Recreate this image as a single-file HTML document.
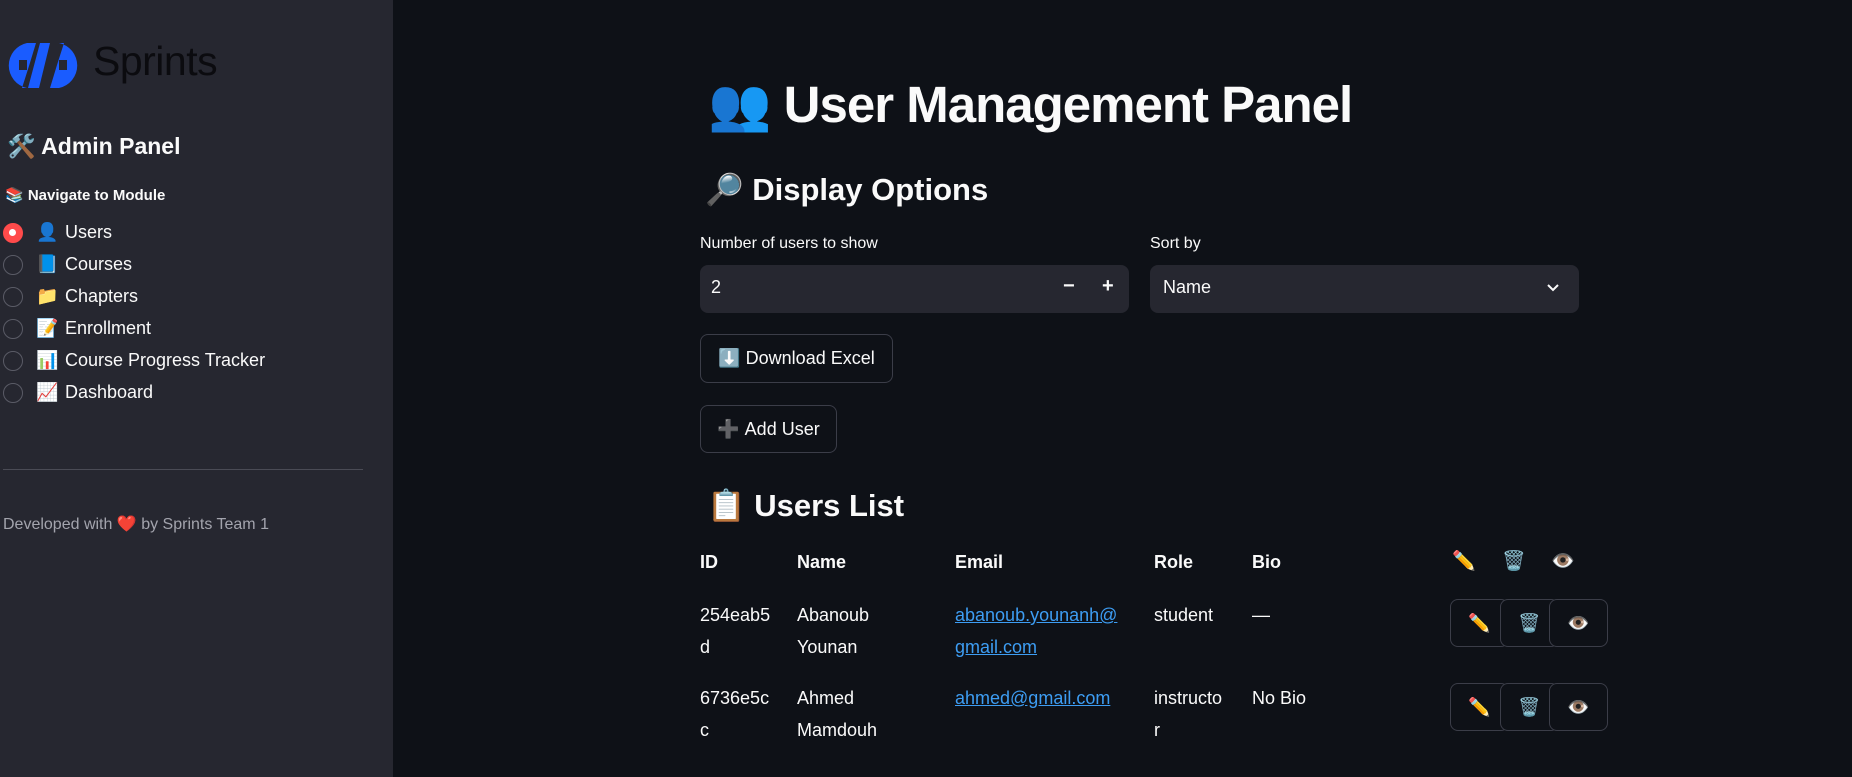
<!DOCTYPE html>
<html><head><meta charset="utf-8"><style>
*{margin:0;padding:0;box-sizing:border-box}
body{width:1852px;height:777px;overflow:hidden;background:#0e1117;font-family:"Liberation Sans","Noto Sans CJK JP",sans-serif;color:#fafafa;position:relative}
.a{position:absolute;white-space:nowrap}
#sb{position:absolute;left:0;top:0;width:393px;height:777px;background:#262730}
.radio{position:absolute;left:3px;width:20px;height:20px;border-radius:50%;border:1.5px solid #5a5b66}
.radio.on{background:#ff4b4b;border-color:#ff4b4b}
.radio.on:after{content:"";position:absolute;left:5px;top:5px;width:7px;height:7px;border-radius:50%;background:#fff}
.nav{position:absolute;left:36px;font-size:18px}
.nav span{display:inline-block;width:29px}
.box{position:absolute;background:#262730;border-radius:8px}
.btn{position:absolute;border:1px solid #3b3d48;border-radius:8px;background:#0e1117;font-size:18px;display:flex;align-items:center;justify-content:center}
.t{position:absolute;font-size:18px;line-height:32px}
.h{font-weight:bold}
.lk{color:#3d9df3;text-decoration:underline}
.ib{position:absolute;width:59px;height:48px;border:1px solid #3b3d48;border-radius:8px;background:#0e1117;font-size:18px;display:flex;align-items:center;justify-content:center}
</style></head><body>
<div id="sb">
<svg class="a" style="left:5px;top:42px" width="76" height="47" viewBox="0 0 76 47">
<path d="M22 1 L31 1 L24 24 L17 46 L22 46 A23 23 0 0 1 22 1 Z" fill="#1a5cff"/>
<path d="M33 1 L43 1 L32 46 L21 46 Z" fill="#1a5cff" transform="translate(2,0)"/>
<path d="M54 46 L45 46 L52 23 L59 1 L54 1 A23 23 0 0 1 54 46 Z" fill="#1a5cff"/>
<rect x="14" y="18" width="8" height="10" fill="#262730"/>
<rect x="54" y="18" width="8" height="10" fill="#262730"/>
</svg>
<div class="a" style="left:93px;top:38px;font-size:41px;color:#0b0b0f;letter-spacing:-0.5px">Sprints</div>
<div class="a" style="left:7px;top:133px;font-size:23px;font-weight:bold">🛠️ Admin Panel</div>
<div class="a" style="left:5px;top:186px;font-size:15px;font-weight:bold">📚 Navigate to Module</div>
<div class="radio on" style="top:223px"></div><div class="nav" style="top:222px"><span>👤</span>Users</div>
<div class="radio" style="top:255px"></div><div class="nav" style="top:254px"><span>📘</span>Courses</div>
<div class="radio" style="top:287px"></div><div class="nav" style="top:286px"><span>📁</span>Chapters</div>
<div class="radio" style="top:319px"></div><div class="nav" style="top:318px"><span>📝</span>Enrollment</div>
<div class="radio" style="top:351px"></div><div class="nav" style="top:350px"><span>📊</span>Course Progress Tracker</div>
<div class="radio" style="top:383px"></div><div class="nav" style="top:382px"><span>📈</span>Dashboard</div>
<div class="a" style="left:3px;top:469px;width:360px;height:1px;background:#4a4b55"></div>
<div class="a" style="left:3px;top:514px;font-size:16px;color:#a3a4ad">Developed with ❤️ by Sprints Team 1</div>
</div>

<div class="a" style="left:708px;top:75px;font-size:51px;font-weight:bold;letter-spacing:-1px">👥 User Management Panel</div>
<div class="a" style="left:705px;top:171px;font-size:31px;font-weight:bold">🔎 Display Options</div>
<div class="a" style="left:700px;top:235px;font-size:16px">Number of users to show</div>
<div class="a" style="left:1150px;top:235px;font-size:16px">Sort by</div>
<div class="box" style="left:700px;top:265px;width:429px;height:48px"></div>
<div class="a" style="left:711px;top:277px;font-size:18px">2</div>
<div class="a" style="left:1063px;top:275px;font-size:20px;font-weight:bold">−</div>
<div class="a" style="left:1102px;top:275px;font-size:20px;font-weight:bold">+</div>
<div class="box" style="left:1150px;top:265px;width:429px;height:48px"></div>
<div class="a" style="left:1163px;top:277px;font-size:18px">Name</div>
<svg class="a" style="left:1546px;top:283px" width="14" height="10" viewBox="0 0 14 10"><path d="M2 2 L7 7 L12 2" stroke="#fafafa" stroke-width="2" fill="none"/></svg>
<div class="btn" style="left:700px;top:334px;width:193px;height:49px">⬇️&nbsp;Download Excel</div>
<div class="btn" style="left:700px;top:405px;width:137px;height:48px">➕&nbsp;Add User</div>
<div class="a" style="left:707px;top:487px;font-size:31px;font-weight:bold">📋 Users List</div>

<div class="t h" style="left:700px;top:546px">ID</div>
<div class="t h" style="left:797px;top:546px">Name</div>
<div class="t h" style="left:955px;top:546px">Email</div>
<div class="t h" style="left:1154px;top:546px">Role</div>
<div class="t h" style="left:1252px;top:546px">Bio</div>
<div class="t" style="left:1452px;top:546px;font-size:19px">✏️</div>
<div class="t" style="left:1502px;top:546px;font-size:19px">🗑️</div>
<div class="t" style="left:1551px;top:546px;font-size:19px">👁️</div>

<div class="t" style="left:700px;top:599px">254eab5<br>d</div>
<div class="t" style="left:797px;top:599px">Abanoub<br>Younan</div>
<div class="t lk" style="left:955px;top:599px">abanoub.younanh@<br>gmail.com</div>
<div class="t" style="left:1154px;top:599px">student</div>
<div class="t" style="left:1252px;top:599px">—</div>
<div class="ib" style="left:1450px;top:599px">✏️</div>
<div class="ib" style="left:1500px;top:599px">🗑️</div>
<div class="ib" style="left:1549px;top:599px">👁️</div>

<div class="t" style="left:700px;top:682px">6736e5c<br>c</div>
<div class="t" style="left:797px;top:682px">Ahmed<br>Mamdouh</div>
<div class="t lk" style="left:955px;top:682px">ahmed@gmail.com</div>
<div class="t" style="left:1154px;top:682px">instructo<br>r</div>
<div class="t" style="left:1252px;top:682px">No Bio</div>
<div class="ib" style="left:1450px;top:683px">✏️</div>
<div class="ib" style="left:1500px;top:683px">🗑️</div>
<div class="ib" style="left:1549px;top:683px">👁️</div>
</body></html>
